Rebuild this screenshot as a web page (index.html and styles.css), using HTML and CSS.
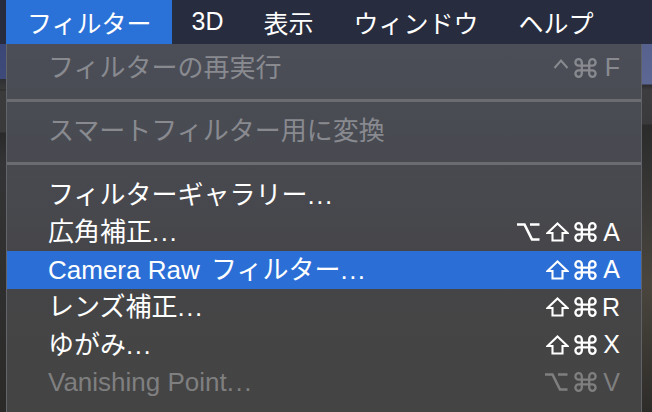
FILE: index.html
```html
<!DOCTYPE html>
<html lang="ja">
<head>
<meta charset="utf-8">
<title>フィルター</title>
<link rel="stylesheet" href="styles.css">
</head>
<body>
<div class="screen">
  <nav class="menubar">
    <span class="mb-item active">フィルター</span>
    <span class="mb-item">3D</span>
    <span class="mb-item">表示</span>
    <span class="mb-item">ウィンドウ</span>
    <span class="mb-item">ヘルプ</span>
  </nav>
  <div class="stage">
    <div class="strip strip-left"></div>
    <div class="menu">
      <div class="item disabled">
        <span class="label">フィルターの再実行</span>
        <span class="keys">
          <svg class="k k-ctrl" viewBox="0 0 16 19" width="16" height="19"><path d="M1.5 10 L8 2.5 L14.5 10"/></svg>
          <svg class="k k-cmd" viewBox="0 0 23 20" width="23" height="20"><path d="M7.8 7.6 V4.4 A3.2 3.2 0 1 0 4.6 7.6 H18.4 A3.2 3.2 0 1 0 15.2 4.4 V15.6 A3.2 3.2 0 1 0 18.4 12.4 H4.6 A3.2 3.2 0 1 0 7.8 15.6 Z"/></svg>
          <span class="kl">F</span>
        </span>
      </div>
      <div class="sep"></div>
      <div class="item disabled">
        <span class="label">スマートフィルター用に変換</span>
      </div>
      <div class="sep"></div>
      <div class="item">
        <span class="label">フィルターギャラリー<span class="dots">...</span></span>
      </div>
      <div class="item">
        <span class="label">広角補正<span class="dots">...</span></span>
        <span class="keys">
          <svg class="k k-opt" viewBox="0 0 24 20" width="24" height="20"><path d="M1 2.5 H8.5 L16 17.5 H23.5 M14 2.5 H23.5"/></svg>
          <svg class="k k-shift" viewBox="0 0 23 20" width="23" height="20"><path d="M11.5 1.5 L21.5 11 H16.5 V18.5 H6.5 V11 H1.5 Z"/></svg>
          <svg class="k k-cmd" viewBox="0 0 23 20" width="23" height="20"><path d="M7.8 7.6 V4.4 A3.2 3.2 0 1 0 4.6 7.6 H18.4 A3.2 3.2 0 1 0 15.2 4.4 V15.6 A3.2 3.2 0 1 0 18.4 12.4 H4.6 A3.2 3.2 0 1 0 7.8 15.6 Z"/></svg>
          <span class="kl">A</span>
        </span>
      </div>
      <div class="item selected">
        <span class="label">Camera Raw <span class="ja">フィルター</span><span class="dots">...</span></span>
        <span class="keys">
          <svg class="k k-shift" viewBox="0 0 23 20" width="23" height="20"><path d="M11.5 1.5 L21.5 11 H16.5 V18.5 H6.5 V11 H1.5 Z"/></svg>
          <svg class="k k-cmd" viewBox="0 0 23 20" width="23" height="20"><path d="M7.8 7.6 V4.4 A3.2 3.2 0 1 0 4.6 7.6 H18.4 A3.2 3.2 0 1 0 15.2 4.4 V15.6 A3.2 3.2 0 1 0 18.4 12.4 H4.6 A3.2 3.2 0 1 0 7.8 15.6 Z"/></svg>
          <span class="kl">A</span>
        </span>
      </div>
      <div class="item">
        <span class="label">レンズ補正<span class="dots">...</span></span>
        <span class="keys">
          <svg class="k k-shift" viewBox="0 0 23 20" width="23" height="20"><path d="M11.5 1.5 L21.5 11 H16.5 V18.5 H6.5 V11 H1.5 Z"/></svg>
          <svg class="k k-cmd" viewBox="0 0 23 20" width="23" height="20"><path d="M7.8 7.6 V4.4 A3.2 3.2 0 1 0 4.6 7.6 H18.4 A3.2 3.2 0 1 0 15.2 4.4 V15.6 A3.2 3.2 0 1 0 18.4 12.4 H4.6 A3.2 3.2 0 1 0 7.8 15.6 Z"/></svg>
          <span class="kl">R</span>
        </span>
      </div>
      <div class="item">
        <span class="label">ゆがみ<span class="dots">...</span></span>
        <span class="keys">
          <svg class="k k-shift" viewBox="0 0 23 20" width="23" height="20"><path d="M11.5 1.5 L21.5 11 H16.5 V18.5 H6.5 V11 H1.5 Z"/></svg>
          <svg class="k k-cmd" viewBox="0 0 23 20" width="23" height="20"><path d="M7.8 7.6 V4.4 A3.2 3.2 0 1 0 4.6 7.6 H18.4 A3.2 3.2 0 1 0 15.2 4.4 V15.6 A3.2 3.2 0 1 0 18.4 12.4 H4.6 A3.2 3.2 0 1 0 7.8 15.6 Z"/></svg>
          <span class="kl">X</span>
        </span>
      </div>
      <div class="item disabled dim">
        <span class="label">Vanishing Point<span class="dots">...</span></span>
        <span class="keys">
          <svg class="k k-opt" viewBox="0 0 24 20" width="24" height="20"><path d="M1 2.5 H8.5 L16 17.5 H23.5 M14 2.5 H23.5"/></svg>
          <svg class="k k-cmd" viewBox="0 0 23 20" width="23" height="20"><path d="M7.8 7.6 V4.4 A3.2 3.2 0 1 0 4.6 7.6 H18.4 A3.2 3.2 0 1 0 15.2 4.4 V15.6 A3.2 3.2 0 1 0 18.4 12.4 H4.6 A3.2 3.2 0 1 0 7.8 15.6 Z"/></svg>
          <span class="kl">V</span>
        </span>
      </div>
    </div>
    <div class="strip strip-right"></div>
  </div>
</div>
</body>
</html>
```

FILE: styles.css
```css
html, body {
  margin: 0;
  padding: 0;
  width: 652px;
  height: 412px;
  overflow: hidden;
  background: #2c2c2c;
}

.screen {
  width: 652px;
  height: 412px;
  display: flex;
  flex-direction: column;
  font-family: "Liberation Sans", "Noto Sans CJK JP", sans-serif;
  color: #ffffff;
}

.menubar {
  height: 44px;
  flex: none;
  display: flex;
  align-items: stretch;
  padding-left: 6px;
  background: #272c3e;
  font-size: 25px;
}

.mb-item {
  display: flex;
  align-items: center;
  padding: 0 20px 1px;
  height: 43px;
  color: #ffffff;
}

.mb-item.active {
  background: #2b72d8;
  padding: 0 20px 1px 21px;
}

.stage {
  flex: 1;
  display: grid;
  grid-template-columns: 6px 636px 10px;
  min-height: 0;
}

.strip-left {
  background:
    linear-gradient(#3b4776 0, #3e4a7a 35px, #2e2f33 35px, #3a3a3b 45px, #2b2b2c 46px, #3b3b3c 47px, #3a3a3b 88px, #2a2a2b 89px, #343436 120px, #2b2a28 100%);
}

.strip-right {
  background:
    linear-gradient(#56618d 0, #5c6794 40px, #2c2c2e 41px, #3d3d3f 46px, #3a3a3c 80px, #2b2b2c 81px, #363534 140px, #4a463e 240px, #2e2c29 100%);
}

.menu {
  display: flex;
  flex-direction: column;
  padding-top: 5px;
  border-left: 1px solid #62656c;
  border-right: 1px solid #606268;
  background: linear-gradient(#4b4e57 0, #48494f 140px, #454547 240px, #444444 100%);
}

.item {
  height: 37.5px;
  flex: none;
  display: flex;
  align-items: center;
  justify-content: space-between;
  padding: 0 21px 0 41px;
  font-size: 26px;
  color: #ffffff;
}

.item.disabled {
  color: #888a90;
}

.item.dim {
  color: #7f7f80;
}

.item.selected {
  background: #2b6fd6;
}

.label {
  white-space: nowrap;
  line-height: 1;
}

.ja {
  margin-left: 4px;
}

.dots {
  letter-spacing: 1.5px;
}

.keys {
  display: flex;
  align-items: center;
  gap: 5px;
}

.k {
  display: block;
  fill: none;
  stroke: currentColor;
  stroke-width: 2.3;
}

.k-shift {
  stroke-width: 2.1;
  stroke-linejoin: miter;
}

.k-opt {
  stroke-width: 2.6;
  margin-right: 1px;
}

.k-ctrl {
  stroke-width: 2;
}

.kl {
  font-size: 25px;
  line-height: 1;
  width: 18px;
  text-align: right;
}

.sep {
  height: 3px;
  flex: none;
  margin: 12px 0 11px;
  background: #6a6c72;
}
```
